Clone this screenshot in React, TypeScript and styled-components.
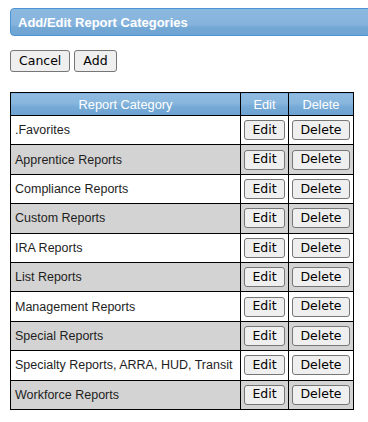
import styled, { createGlobalStyle } from "styled-components";

const GlobalStyle = createGlobalStyle`
  html, body {
    margin: 0;
    padding: 0;
    background: #ffffff;
    overflow: hidden;
  }
  body {
    font-family: "Liberation Sans", Arial, sans-serif;
    font-size: 13px;
    color: #222222;
  }
`;

const Page = styled.div`
  padding: 8px 0 0 10px;
`;

const TitleBar = styled.div`
  height: 26px;
  margin-right: -6px;
  display: flex;
  align-items: center;
  padding-left: 7px;
  border: 1px solid #4a94d6;
  border-radius: 4px 0 0 4px;
  background: linear-gradient(#8cb9df 0%, #85b3dc 60%, #74a8d5 70%, #6ea4d3 100%);
  color: #ffffff;
  font-weight: bold;
  font-size: 13px;
`;

const Toolbar = styled.div`
  display: flex;
  gap: 4px;
  margin-top: 14px;
`;

const Button = styled.button<{ $tall?: boolean }>`
  height: ${(p) => (p.$tall ? "22px" : "20px")};
  padding: 0 ${(p) => (p.$tall ? "8px" : "7px")};
  border: 1px solid #767676;
  border-radius: 3px;
  background: #efefef;
  color: #000000;
  font-family: "DejaVu Sans", Verdana, sans-serif;
  font-size: 12.5px;
  line-height: 1;
  cursor: pointer;
`;

const Table = styled.table`
  margin-top: 20px;
  border-collapse: collapse;
  table-layout: fixed;
  border: 1px solid #000000;
`;

const HeadCell = styled.th<{ $w: number }>`
  width: ${(p) => p.$w}px;
  height: 22px;
  padding: 0;
  border: 1px solid #000000;
  background: linear-gradient(#8fbbe0 0%, #88b6dd 45%, #76aad6 60%, #6ca3d2 100%);
  color: #ffffff;
  font-weight: normal;
  font-size: 12.8px;
  text-align: center;
`;

const Row = styled.tr<{ $shaded: boolean }>`
  height: 29.4px;
  background: ${(p) => (p.$shaded ? "#d3d3d3" : "#ffffff")};
`;

const NameCell = styled.td`
  padding: 0 0 0 4px;
  border: 1px solid #000000;
  white-space: nowrap;
  font-size: 12.5px;
  color: #1e1e1e;
`;

const ActionCell = styled.td`
  padding: 0;
  border: 1px solid #000000;
  text-align: center;
`;

const categories = [
  ".Favorites",
  "Apprentice Reports",
  "Compliance Reports",
  "Custom Reports",
  "IRA Reports",
  "List Reports",
  "Management Reports",
  "Special Reports",
  "Specialty Reports, ARRA, HUD, Transit",
  "Workforce Reports",
];

export default function App() {
  return (
    <Page>
      <GlobalStyle />
      <TitleBar>Add/Edit Report Categories</TitleBar>
      <Toolbar>
        <Button $tall>Cancel</Button>
        <Button $tall>Add</Button>
      </Toolbar>
      <Table>
        <thead>
          <tr>
            <HeadCell $w={229}>Report Category</HeadCell>
            <HeadCell $w={47}>Edit</HeadCell>
            <HeadCell $w={64}>Delete</HeadCell>
          </tr>
        </thead>
        <tbody>
          {categories.map((name, i) => (
            <Row key={name} $shaded={i % 2 === 1}>
              <NameCell>{name}</NameCell>
              <ActionCell>
                <Button>Edit</Button>
              </ActionCell>
              <ActionCell>
                <Button>Delete</Button>
              </ActionCell>
            </Row>
          ))}
        </tbody>
      </Table>
    </Page>
  );
}
